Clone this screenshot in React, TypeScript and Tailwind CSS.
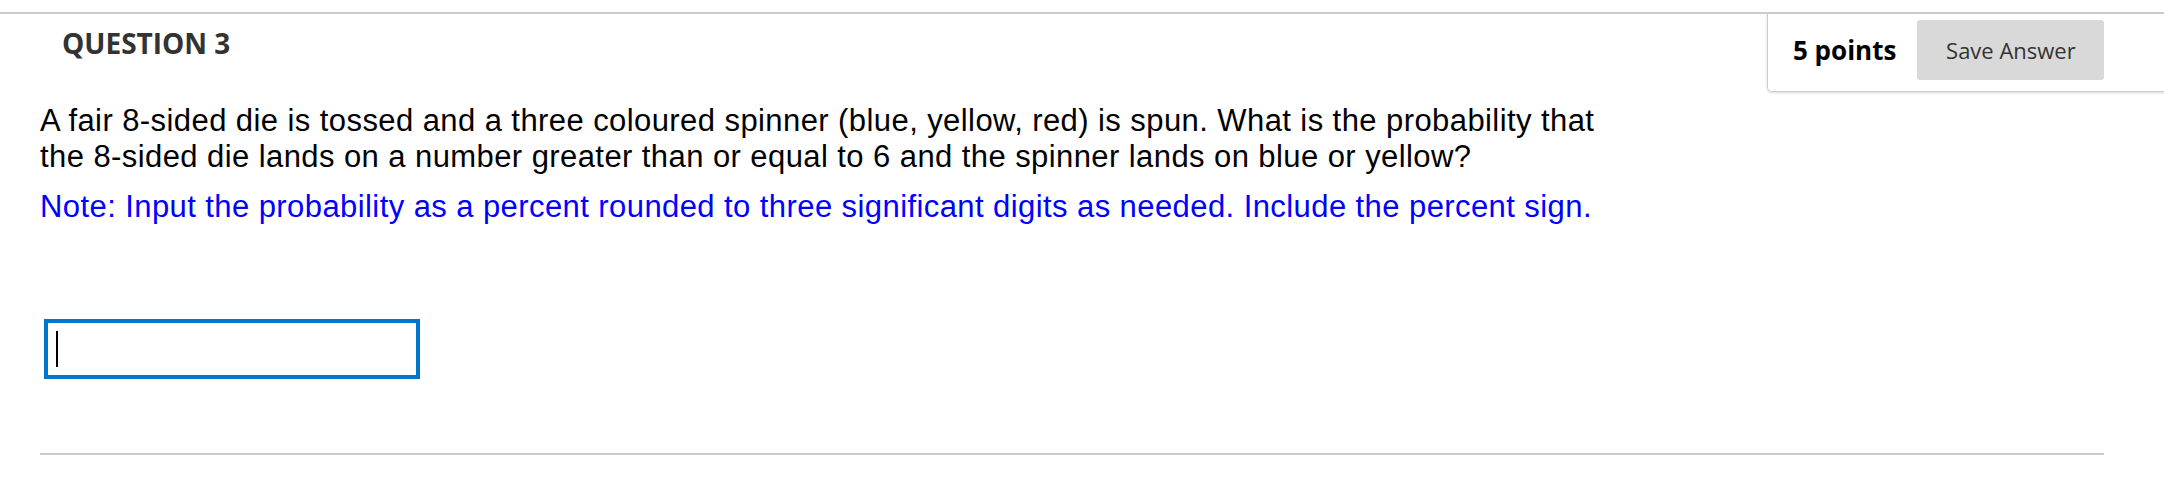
import React from 'react';

const App = () => {
    return (
        <div className="w-[2164px] h-[480px] bg-white overflow-hidden pt-[12px] font-['Liberation_Sans',Arial,sans-serif]">
            {/* header row */}
            <div className="border-t-2 border-[#cccccc] flex items-start">
                <h2 className="pl-[62px] mt-[11px] text-[28px] leading-[36px] font-bold text-[#333333] font-['Open_Sans',sans-serif]">
                    QUESTION 3
                </h2>
                <div className="ml-auto mr-[-30px] w-[427px] flex items-center gap-[21px] pl-[25px] pt-[6px] pb-[11px] border-x border-b border-[#cccccc] rounded-b-[5px] shadow-[0_1px_3px_rgba(0,0,0,0.15)] font-['Open_Sans',sans-serif]">
                    <span className="text-[26px] font-bold text-black leading-none">5 points</span>
                    <button className="w-[187px] h-[60px] rounded-[3px] bg-[#d9d9d9] text-[22px] text-[#333333]">
                        Save Answer
                    </button>
                </div>
            </div>

            {/* question body */}
            <div className="pl-[40px] mt-[11px]">
                <p className="text-[31px] leading-[36px] tracking-[0.42px] text-black whitespace-nowrap">
                    A fair 8-sided die is tossed and a three coloured spinner (blue, yellow, red) is spun. What is the probability that
                    <br />
                    the 8-sided die lands on a number greater than or equal to 6 and the spinner lands on blue or yellow?
                </p>
                <p className="mt-[14px] text-[31px] leading-[36px] tracking-[0.42px] text-[#0000ff] whitespace-nowrap">
                    Note: Input the probability as a percent rounded to three significant digits as needed. Include the percent sign.
                </p>

                <div className="ml-[4px] mt-[94px] w-[376px] h-[60px] border-4 border-[#0076cc] flex items-center pl-[8px]">
                    <span className="block w-[2px] h-[36px] bg-black" />
                </div>

                <div className="mt-[74px] w-[2064px] h-[2px] bg-[#cccccc]" />
            </div>
        </div>
    );
};

export default App;
